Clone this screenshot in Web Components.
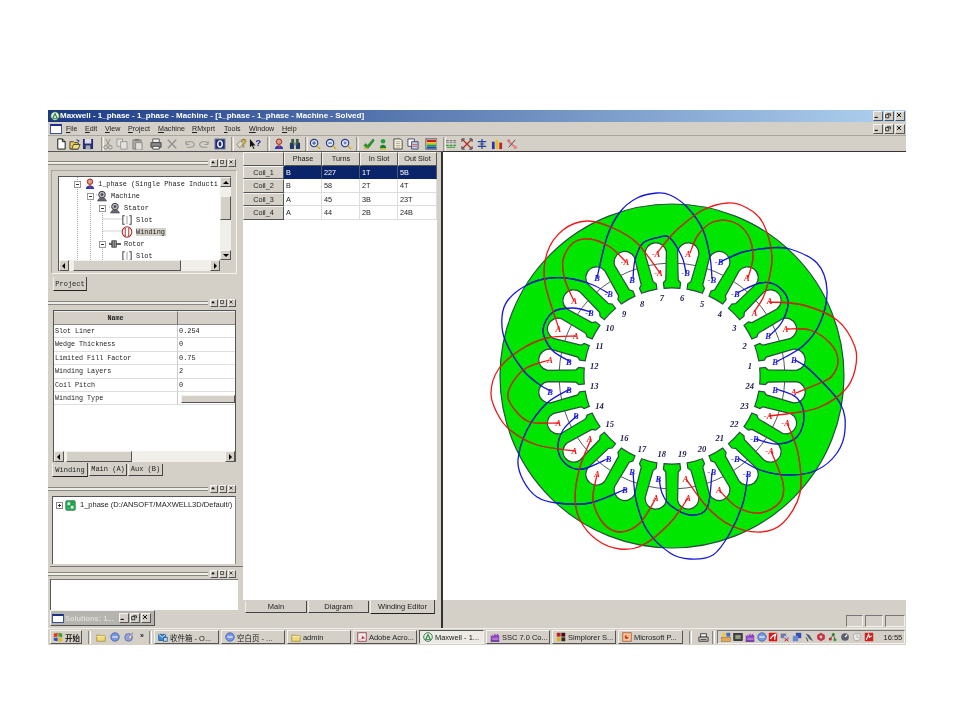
<!DOCTYPE html>
<html>
<head>
<meta charset="utf-8">
<title>Maxwell</title>
<style>
  html, body { margin: 0; background: #fff; }
  body { padding: 110px 0 0 48px; font-family: "Liberation Sans", "Noto Sans CJK SC", sans-serif; }
</style>
</head>
<body>
<maxwell-app></maxwell-app>
<script>
const BEVEL = `
  .up { border: 1px solid; border-color: #f4f2ee #555 #555 #f4f2ee; box-sizing: border-box; background: #d4d0c8; }
  .in { border: 1px solid; border-color: #777 #f4f2ee #f4f2ee #777; box-sizing: border-box; }
`
const MONO = `"Liberation Mono", monospace`

const ICONS = {
  page: `<path d="M3 1h5l3 3v8H3z" fill="#fff" stroke="#111"/><path d="M8 1v3h3" fill="none" stroke="#111"/>`,
  open: `<path d="M1 4h4l1 1h4v7H1z" fill="#e8c858" stroke="#443"/><path d="M3 12l2-5h7l-2 5z" fill="#f4dc80" stroke="#443"/><path d="M8 2l3 1-1 1" fill="none" stroke="#226"/>`,
  save: `<path d="M1 1h11v11H1z" fill="#24306e"/><path d="M3 1h7v5H3z" fill="#dde"/><path d="M4 8h5v4H4z" fill="#aab"/>`,
  cut: `<path d="M4 1l4 7M9 1L5 8" stroke="#8a8a86" fill="none"/><circle cx="4" cy="10" r="2" fill="none" stroke="#8a8a86"/><circle cx="9" cy="10" r="2" fill="none" stroke="#8a8a86"/>`,
  copy: `<path d="M1 1h6v8H1z" fill="#e4e2dc" stroke="#999"/><path d="M5 4h7v8H5z" fill="#e4e2dc" stroke="#999"/>`,
  paste: `<path d="M2 2h9v10H2z" fill="#aaa79e" stroke="#888"/><path d="M5 5h7v8H5z" fill="#e0ded8" stroke="#888"/><path d="M4 1h5v2H4z" fill="#777"/>`,
  print: `<path d="M3 1h7v4H3z" fill="#eee" stroke="#555"/><path d="M1 5h11v5H1z" fill="#8a8a8a" stroke="#444"/><path d="M3 9h7v3H3z" fill="#fff" stroke="#444"/>`,
  del: `<path d="M2 2l9 9M11 2l-9 9" stroke="#94928c" stroke-width="1.6"/>`,
  undo: `<path d="M2 6c2-3 7-3 9 0 1 2-1 4-4 4H3" fill="none" stroke="#98968f" stroke-width="1.2"/><path d="M2 3v4h4" fill="none" stroke="#98968f"/>`,
  redo: `<path d="M11 6C9 3 4 3 2 6c-1 2 1 4 4 4h4" fill="none" stroke="#98968f" stroke-width="1.2"/><path d="M11 3v4H7" fill="none" stroke="#98968f"/>`,
  zero: `<rect x="1" y="1" width="11" height="11" fill="#1c2c78" stroke="#889"/><ellipse cx="6.5" cy="6.5" rx="2.4" ry="3.4" fill="none" stroke="#fff" stroke-width="1.5"/>`,
  help: `<path d="M1 7l4-4 3 3-4 5z" fill="#dcd8c8" stroke="#888"/><text x="5" y="10" font-size="11" font-weight="bold" font-family="Liberation Sans" fill="#d8b000" stroke="#554" stroke-width=".3">?</text>`,
  what: `<path d="M1 1v9l2-2 2 4 1-1-2-3h3z" fill="#111"/><text x="7" y="9" font-size="10" font-weight="bold" font-family="Liberation Sans" fill="#1a2a88">?</text>`,
  user: `<circle cx="6.5" cy="4" r="3" fill="#d8a080" stroke="#a02020"/><path d="M2 12c0-5 9-5 9 0z" fill="#2838c0"/><path d="M5 8h3l-1 4z" fill="#c03030"/>`,
  binoc: `<rect x="1" y="5" width="4.5" height="7" rx="1" fill="#1f3a60"/><rect x="7.5" y="5" width="4.5" height="7" rx="1" fill="#1f3a60"/><rect x="2.5" y="1" width="3" height="5" fill="#3a5a48"/><rect x="7.5" y="1" width="3" height="5" fill="#3a5a48"/><rect x="5" y="5" width="3" height="3" fill="#888"/>`,
  zin: `<circle cx="5.5" cy="5.5" r="4" fill="#dfe8f8" stroke="#24388a" stroke-width="1.2"/><path d="M3.5 5.5h4M5.5 3.5v4" stroke="#24388a"/><path d="M8.5 8.5l3.5 3.5" stroke="#c8b020" stroke-width="1.6"/>`,
  zout: `<circle cx="5.5" cy="5.5" r="4" fill="#dfe8f8" stroke="#24388a" stroke-width="1.2"/><path d="M3.5 5.5h4" stroke="#24388a"/><path d="M8.5 8.5l3.5 3.5" stroke="#c8b020" stroke-width="1.6"/>`,
  zfit: `<circle cx="5.5" cy="5.5" r="4" fill="#dfe8f8" stroke="#24388a" stroke-width="1.2"/><circle cx="5.5" cy="5.5" r="1.6" fill="#6a80c0"/><path d="M8.5 8.5l3.5 3.5" stroke="#c8b020" stroke-width="1.6"/>`,
  check: `<path d="M1 8l2-2 2 2 6-7 1 2-7 9z" fill="#20a020" stroke="#0e5a18" stroke-width=".6"/><path d="M1 11h5" stroke="#c8b020" stroke-width="1.4"/>`,
  person: `<circle cx="6.5" cy="3.5" r="2.5" fill="#20a040"/><path d="M3 11c0-5 7-5 7 0z" fill="#148030"/><path d="M3 12h7" stroke="#d8b820" stroke-width="1.5"/>`,
  doc: `<path d="M2 1h7l2 2v9H2z" fill="#fbf6d8" stroke="#444"/><path d="M4 4h5M4 6h5M4 8h5M4 10h5" stroke="#888" stroke-width=".7"/>`,
  docs: `<path d="M1 1h7v8H1z" fill="#fff" stroke="#446"/><path d="M5 4h7v8H5z" fill="#c8d0e8" stroke="#446"/><path d="M6 7h5M6 9h5" stroke="#c03030" stroke-width=".7"/>`,
  chart: `<rect x="1" y="1" width="12" height="11" fill="#fff" stroke="#444"/><rect x="2" y="2" width="10" height="2.5" fill="#c82020"/><rect x="2" y="4.5" width="10" height="2.5" fill="#e0c020"/><rect x="2" y="7" width="10" height="2.5" fill="#20a040"/><rect x="2" y="9.5" width="10" height="2" fill="#2040c0"/>`,
  ant: `<path d="M1 3h3M5 3h3M9 3h3" stroke="#667" stroke-width="1.2"/><path d="M1 5h3M5 5h3M9 5h3" stroke="#889" /><path d="M1 8h3M5 8h3M9 8h3M2 10h9" stroke="#3a9a3a" stroke-width="1.2"/>`,
  redx: `<path d="M2 2l9 9M11 2l-9 9" stroke="#b01818" stroke-width="1.4"/><path d="M1 1h3M1 1v3M12 12H9M12 12V9" stroke="#223" /><path d="M12 1H9M12 1v3M1 12h3M1 12V9" stroke="#223"/>`,
  cross: `<path d="M6.5 1v11M2 4h9M2 9h9M4 6.5h5" stroke="#28409a" stroke-width="1.3"/>`,
  bars: `<rect x="1" y="4" width="3" height="8" fill="#2038b0"/><rect x="5" y="2" width="3" height="10" fill="#e8c020"/><rect x="9" y="5" width="3" height="7" fill="#c02020"/>`,
  wrench: `<path d="M2 3l9 8" stroke="#d88080" stroke-width="2"/><path d="M10 2L3 10" stroke="#445" stroke-width="1"/><circle cx="3" cy="3" r="1.6" fill="#d87070"/><circle cx="10" cy="10" r="2" fill="#e88888"/>`,
  machine: `<circle cx="6.5" cy="5" r="3.6" fill="#b8b8c0" stroke="#333"/><circle cx="6.5" cy="5" r="1.4" fill="#445"/><path d="M1.5 12h10l-2-3h-6z" fill="#667" stroke="#333" stroke-width=".5"/>`,
  rotor: `<rect x="3" y="3" width="5" height="7" fill="#999" stroke="#333" stroke-width=".7"/><path d="M4 3v7M6 3v7" stroke="#333" stroke-width=".6"/><path d="M8 6.5h5M0 6.5h3" stroke="#333" stroke-width="1.4"/>`,
  slot: `<path d="M4 2H2v9h2M9 2h2v9H9" fill="none" stroke="#444" stroke-width="1.1"/><path d="M6.5 2v9" stroke="#999"/>`,
  coil: `<ellipse cx="6.5" cy="6.5" rx="5.2" ry="5.6" fill="#fff" stroke="#a02020" stroke-width="1.1"/><path d="M4.6 2v9M8.4 2v9" stroke="#a02020"/>`,
  proj: `<rect x="1" y="1" width="11" height="11" rx="1" fill="#38b868" stroke="#0e6a38"/><path d="M3 3h3v3H3zM7 7h3v3H7z" fill="#d8f4d8"/><path d="M7 3h3M7 5h3M3 8h3" stroke="#0e5a30" stroke-width=".7"/>`,
  start: `<path d="M1 2l5-1v5l-5 1z" fill="#d84020"/><path d="M7 1l5 1v5l-5-1z" fill="#40a030"/><path d="M1 8l5-1v5l-5-1z" fill="#2850c0"/><path d="M7 7l5 1v4l-5 1z" fill="#e8b820"/>`,
  folder: `<path d="M1 4h4l1 1h6v7H1z" fill="#f0d878" stroke="#a08830"/><path d="M1 6h11" stroke="#fff4c0"/>`,
  ball: `<circle cx="6.5" cy="6.5" r="5.5" fill="#7898e0" stroke="#3a58a8"/><path d="M3 6.5h7" stroke="#fff" stroke-width="1.4"/>`,
  quick: `<circle cx="6" cy="7" r="5" fill="#9aa4dc" stroke="#5a64a8"/><path d="M5 8l6-7-2 8z" fill="#e8e8f0" stroke="#445" stroke-width=".5"/>`,
  inbox: `<rect x="1" y="3" width="9" height="8" fill="#3c88d0" stroke="#1c5898"/><path d="M1 3l4.5 4L10 3" fill="none" stroke="#fff"/><rect x="7" y="7" width="5" height="5" fill="#b8d8f0" stroke="#1c5898"/>`,
  adobe: `<rect x="1" y="1" width="11" height="11" fill="#f4e8e8" stroke="#8a3040"/><path d="M2 11c4-1 6-5 5-9 0 4 2 6 5 7-4-1-7 0-10 2z" fill="#c02030"/>`,
  maxwell: `<circle cx="6.5" cy="6.5" r="5.6" fill="#e8f0e0" stroke="#155a2a"/><path d="M6.5 2l4 8h-8z" fill="#1a7a38"/><path d="M6.5 5l1.8 4H4.700z" fill="#e8f0e0"/>`,
  ssc: `<path d="M1 12V4l2 2V3l2 3V2l2 3V2l2 3V2l3 3v7z" fill="#8a3cc0"/><path d="M1 12h11" stroke="#3a1a70" stroke-width="1.2"/><path d="M3 8h8M3 10h8" stroke="#e0d0f0" stroke-width=".7"/>`,
  simp: `<rect x="1" y="1" width="5" height="5" fill="#c02020"/><rect x="7" y="1" width="5" height="5" fill="#401010"/><rect x="1" y="7" width="5" height="5" fill="#e0b020"/><rect x="7" y="7" width="5" height="5" fill="#2a2a2a"/>`,
  ppt: `<rect x="1" y="1" width="11" height="11" fill="#f0c8a0" stroke="#b05020"/><circle cx="6" cy="6.500" r="2.600" fill="#d83010"/><path d="M6 6.500V3.900a2.600 2.600 0 0 1 2.600 2.600z" fill="#f8e0a0"/>`,
  printer: `<path d="M3 2h7v4H3z" fill="#eee" stroke="#333"/><path d="M1 6h11v5H1z" fill="#c8c6c0" stroke="#333"/><path d="M3 9h7" stroke="#333"/>`,
  t1: `<rect x="1" y="1" width="5" height="5" fill="#e8c850"/><rect x="7" y="1" width="5" height="5" fill="#4868b8"/><rect x="1" y="7" width="11" height="5" fill="#e8a850" stroke="#705010" stroke-width=".5"/>`,
  t2: `<rect x="1" y="2" width="11" height="9" fill="#444" stroke="#222"/><rect x="3" y="4" width="7" height="5" fill="#9a9a80"/>`,
  t5: `<rect x="1" y="1" width="11" height="11" rx="1" fill="#d81818"/><path d="M3 9c3-5 5-5 7-6-1 3-2 5-1 7" fill="none" stroke="#fff" stroke-width="1.6"/>`,
  t6: `<rect x="1" y="2" width="7" height="6" fill="#6878a8"/><rect x="5" y="5" width="7" height="6" fill="#b8c0d8"/><path d="M6 8l5 4M11 8l-5 4" stroke="#d02020" stroke-width="1.2"/>`,
  t7: `<rect x="5" y="1" width="7" height="7" fill="#3050b0"/><rect x="1" y="5" width="7" height="7" fill="#6a88d0"/>`,
  t8: `<path d="M2 2l5 2 5 8-5-3z" fill="#4a5a70"/><path d="M3 7l2 5" stroke="#222"/>`,
  t9: `<path d="M6.500 1l5 3v5l-5 3-5-3V4z" fill="#c83048"/><circle cx="6.500" cy="6.500" r="1.800" fill="#f0d0d0"/>`,
  t10: `<circle cx="3" cy="9" r="2" fill="#c83028"/><circle cx="9" cy="10" r="2" fill="#30a040"/><circle cx="7" cy="3" r="2" fill="#30a040"/><path d="M3 9l4-6 2 7" fill="none" stroke="#444"/>`,
  t11: `<circle cx="6.500" cy="6.500" r="5" fill="#5a6070"/><path d="M6.500 6.500l3-3" stroke="#fff" stroke-width="1.400"/>`,
  t12: `<circle cx="6.500" cy="6.500" r="5" fill="#e8e8e4" stroke="#a0a0a0"/><path d="M6.500 3v4h3" fill="none" stroke="#aaa"/>`,
  t13: `<rect x="1" y="1" width="11" height="11" fill="#d02020"/><path d="M3 10l3-7 1 4 3-2" fill="none" stroke="#fff" stroke-width="1.400"/>`,
}
const ico = (name, size = 13) =>
  `<svg width="${size}" height="${size}" viewBox="0 0 13 13" style="display:block;flex:none">${ICONS[name]}</svg>`

// small window buttons, kind "dock" or "mdi"
class WinButtons extends HTMLElement {
  connectedCallback() {
    const kind = this.getAttribute('kind') || 'mdi'
    const size = +(this.getAttribute('size') || 10)
    const first = kind === 'dock'
      ? `<path d="M2 7h6L5 3z" fill="#111"/>`
      : `<path d="M2 8h4" stroke="#111" stroke-width="1.4"/>`
    const second = kind === 'dock'
      ? `<path d="M2.500 2.500h5v5h-5z" fill="none" stroke="#111"/>`
      : `<path d="M4 3.500h4v3M2 4.500h4v4H2z" fill="none" stroke="#111"/>`
    const third = `<path d="M2.500 2.500l5 5M7.500 2.500l-5 5" stroke="#111" stroke-width="1.200"/>`
    const root = this.attachShadow({ mode: 'open' })
    root.innerHTML = `<style>${BEVEL}
      :host { display: flex; gap: 1px; flex: none; }
      div { width: ${size}px; height: ${size}px; }
      svg { display: block; width: 100%; height: 100%; margin: -1px; }
    </style>` + [first, second, third].map((g) =>
      `<div class="up"><svg viewBox="0 0 10 10">${g}</svg></div>`).join('')
  }
}
customElements.define('win-buttons', WinButtons)

class TitleBar extends HTMLElement {
  constructor() {
    super()
    this.attachShadow({ mode: 'open' }).innerHTML = `<style>
      :host { display: flex; align-items: center; height: 12px; background: linear-gradient(90deg, #1c3a84, #b0d2f0); padding: 0 1px 0 2px; }
      span { flex: 1; margin-left: 0; color: #fff; font: bold 8px/12px "Liberation Sans", sans-serif; white-space: nowrap; }
    </style>${ico('maxwell', 10)}<span><slot></slot></span><win-buttons></win-buttons>`
  }
}
customElements.define('title-bar', TitleBar)

class MenuBar extends HTMLElement {
  constructor() {
    super()
    const items = ['File', 'Edit', 'View', 'Project', 'Machine', 'RMxprt', 'Tools', 'Window', 'Help']
    this.attachShadow({ mode: 'open' }).innerHTML = `<style>
      :host { display: flex; align-items: center; height: 14px; background: #d4d0c8; padding: 0 1px 0 2px; border-bottom: 1px solid #aaa69e; box-sizing: border-box; font: 7.100px "Liberation Sans", sans-serif; color: #222; }
      .doc { width: 12px; height: 10px; box-sizing: border-box; border: 1px solid #3a50a0; border-top: 2px solid #1a2f88; background: #fff; margin-right: 4px; }
      nav { flex: 1; display: flex; }
      a { white-space: nowrap; }
      a::first-letter { text-decoration: underline; }
    </style><div class="doc"></div><nav>${items.map((t, i) =>
      `<a style="display:inline-block;width:${[19, 20, 23, 30, 34, 32, 25, 33, 20][i]}px">${t}</a>`).join('')}</nav><win-buttons></win-buttons>`
  }
}
customElements.define('menu-bar', MenuBar)

class ToolBar extends HTMLElement {
  constructor() {
    super()
    // [centre x in window coordinates, icon], 0 as icon is a separator
    const items = [[61, 'page'], [75, 'open'], [88, 'save'], [102, 0], [108, 'cut'], [122, 'copy'], [137, 'paste'], [156, 'print'], [172, 'del'], [190, 'undo'], [204, 'redo'], [220, 'zero'], [232, 0],
      [242, 'help'], [255, 'what'], [268, 0], [279, 'user'], [295, 'binoc'], [306, 0], [315, 'zin'], [331, 'zout'], [346, 'zfit'], [357, 0], [369, 'check'], [383, 'person'], [398, 'doc'], [413, 'docs'], [431, 'chart'], [444, 0],
      [451, 'ant'], [467, 'redx'], [482, 'cross'], [497, 'bars'], [512, 'wrench']]
    let x = 48
    const html = items.map(([cx, name]) => {
      const w = name ? 12 : 3
      const gap = cx - w / 2 - x
      x = cx + w / 2
      return name
        ? `<span style="margin-left:${gap}px">${ico(name, 12)}</span>`
        : `<i style="margin-left:${gap}px"></i>`
    }).join('')
    this.attachShadow({ mode: 'open' }).innerHTML = `<style>
      :host { display: flex; height: 16px; background: #d4d0c8; align-items: center; border-bottom: 1px solid #555; box-sizing: border-box; }
      span { display: block; width: 12px; flex: none; }
      i { display: block; width: 1px; height: 14px; border-left: 1px solid #98958c; border-right: 1px solid #f4f2ee; flex: none; }
    </style>${html}`
  }
}
customElements.define('tool-bar', ToolBar)

class DockHead extends HTMLElement {
  constructor() {
    super()
    this.attachShadow({ mode: 'open' }).innerHTML = `<style>
      :host { display: flex; align-items: center; height: 9px; padding: 0 7px 0 0; margin-left: -2px; gap: 1px; }
      div { flex: 1; height: 2px; border-top: 1px solid #8a877f; border-bottom: 1px solid #8a877f; background: #f0eee8; margin-right: 1px; }
    </style><div></div><win-buttons kind="dock" size="8"></win-buttons>`
  }
}
customElements.define('dock-head', DockHead)

class TabStrip extends HTMLElement {
  connectedCallback() {
    const tabs = this.getAttribute('tabs').split('|')
    const active = +this.getAttribute('active')
    const widths = this.getAttribute('widths').split(',')
    const mono = this.hasAttribute('mono')
    this.attachShadow({ mode: 'open' }).innerHTML = `<style>
      :host { display: flex; align-items: flex-start; font: ${mono ? `7px ${MONO}` : '7.500px "Liberation Sans", sans-serif'}; color: #222; }
      div { box-sizing: border-box; border: 1px solid; border-top: 0; border-color: #d4d0c8 #444 #444 #eee; text-align: center; height: 12px; line-height: 11px; margin-right: 1px; margin-top: 1px; white-space: nowrap; }
      div.on { height: 14px; margin-top: 0; line-height: 14px; background: #d4d0c8; border-bottom-color: #222; }
    </style>` + tabs.map((t, i) =>
      `<div class="${i === active ? 'on' : ''}" style="width:${widths[i]}px">${t}</div>`).join('')
  }
}
customElements.define('tab-strip', TabStrip)

class ScrollBar extends HTMLElement {
  connectedCallback() {
    const vert = this.hasAttribute('vertical')
    const before = this.getAttribute('before'), size = this.getAttribute('thumb')
    const arrow = vert ? ['M1 6l3-3 3 3z', 'M1 3l3 3 3-3z'] : ['M5 1L2 4l3 3z', 'M3 1l3 3-3 3z']
    this.attachShadow({ mode: 'open' }).innerHTML = `<style>${BEVEL}
      :host { display: flex; flex-direction: ${vert ? 'column' : 'row'}; flex: none; ${vert ? 'width: 11px' : 'height: 11px'}; background: #f1efe9; box-sizing: border-box; }
      .btn { flex: none; width: ${vert ? '100%' : '10px'}; height: ${vert ? '10px' : '100%'}; display: flex; align-items: center; justify-content: center; }
      svg { width: 8px; height: 8px; }
      .t { ${vert ? 'height' : 'width'}: ${size}px; flex: none; margin-${vert ? 'top' : 'left'}: ${before}px; }
      .s { flex: 1; }
    </style>
    <div class="btn up"><svg viewBox="0 0 8 8"><path d="${arrow[0]}"/></svg></div>
    <div class="t up"></div><div class="s"></div>
    <div class="btn up"><svg viewBox="0 0 8 8"><path d="${arrow[1]}"/></svg></div>`
  }
}
customElements.define('scroll-bar', ScrollBar)

class ProjectTree extends HTMLElement {
  constructor() {
    super()
    const rows = [
      [77, 'user', 90, 98, '1_phase (Single Phase Inducti'],
      [90, 'machine', 102, 111, 'Machine'],
      [102, 'machine', 115, 124, 'Stator'],
      [0, 'slot', 127, 136, 'Slot'],
      [0, 'coil', 127, 136, 'Winding', 1],
      [102, 'rotor', 115, 124, 'Rotor'],
      [0, 'slot', 127, 136, 'Slot'],
    ]
    const origin = 59
    const body = rows.map(([box, icon, ix, tx, text, hi]) => `<div class="row">
        ${box ? `<b style="margin-left:${box - 3 - origin}px"><u></u></b>` : ''}
        <span style="${box ? `margin-left:${ix - 6 - box - 4}px` : `margin-left:${ix - 6 - origin}px`}">${ico(icon, 12)}</span>
        <em class="${hi ? 'hi' : ''}" style="margin-left:${tx - ix - 6}px">${text}</em></div>`).join('')
    this.attachShadow({ mode: 'open' }).innerHTML = `<style>${BEVEL}
      :host { display: grid; grid-template-columns: 1fr 11px; grid-template-rows: 1fr 11px; height: 95px; background: #fff; font: 6.900px ${MONO}; color: #222; overflow: hidden; box-sizing: border-box; border-left: 1px solid #555; border-top: 1px solid #555; }
      .tree { position: relative; padding-top: 1px; overflow: hidden; white-space: nowrap; }
      .row { display: flex; align-items: center; height: 12px; position: relative; }
      b { width: 7px; height: 7px; box-sizing: border-box; border: 1px solid #999; background: #fff; flex: none; position: relative; }
      u { position: absolute; left: 1px; top: 2px; width: 3px; height: 1px; background: #333; }
      em { font-style: normal; }
      em.hi { background: #d4d0c8; padding-right: 1px; }
      svg.lines { position: absolute; left: 0; top: 0; }
      .corner { background: #d4d0c8; }
    </style>
    <div class="tree">
      <svg class="lines" width="160" height="90" stroke="#aaa" stroke-dasharray="1 1" fill="none"><path d="M18.500 0V90M31.500 18V90M43.500 30V70M43.500 42h20M43.500 54h20M37 18h6M50 30h6M50 66h6M43.500 66V90"/></svg>
      ${body}
    </div>
    <scroll-bar vertical before="9" thumb="24"></scroll-bar>
    <scroll-bar before="4" thumb="108"></scroll-bar>
    <div class="corner"></div>`
  }
}
customElements.define('project-tree', ProjectTree)

class PropGrid extends HTMLElement {
  constructor() {
    super()
    const rows = [['Slot Liner', '0.254'], ['Wedge Thickness', '0'], ['Limited Fill Factor', '0.75'], ['Winding Layers', '2'], ['Coil Pitch', '0'], ['Winding Type', '']]
    this.attachShadow({ mode: 'open' }).innerHTML = `<style>${BEVEL}
      :host { display: flex; flex-direction: column; height: 152px; background: #fff; font: 6.700px ${MONO}; color: #222; border-left: 1px solid #555; border-top: 1px solid #555; border-right: 1px solid #555; box-sizing: border-box; }
      .grid { flex: 1; display: grid; grid-template-columns: 124px 1fr; grid-template-rows: 14px; grid-auto-rows: 13.400px; align-content: start; }
      .h { background: #d4d0c8; border-right: 1px solid #777; border-bottom: 1px solid #888; border-top: 1px solid #eee; box-sizing: border-box; text-align: center; line-height: 12px; font-weight: bold; }
      .c { border-bottom: 1px solid #ddd; border-right: 1px solid #ccc; padding-left: 1px; line-height: 13px; box-sizing: border-box; white-space: nowrap; }
      .v { border-right: 0; font-size: 6.900px; padding-left: 1px; }
      .combo { margin: 3px 0 0 2px; height: 8px; }
    </style>
    <div class="grid">
      <div class="h">Name</div><div class="h" style="border-right:0"></div>
      ${rows.map(([n, v], i) => `<div class="c">${n}</div><div class="c v">${i === 5 ? '<div class="combo up"></div>' : v}</div>`).join('')}
    </div>
    <scroll-bar before="2" thumb="66"></scroll-bar>`
  }
}
customElements.define('prop-grid', PropGrid)

class CoilTable extends HTMLElement {
  constructor() {
    super()
    const rows = [['Coil_1', 'B', '227', '1T', '5B'], ['Coil_2', 'B', '58', '2T', '4T'], ['Coil_3', 'A', '45', '3B', '23T'], ['Coil_4', 'A', '44', '2B', '24B']]
    this.attachShadow({ mode: 'open' }).innerHTML = `<style>${BEVEL}
      :host { display: grid; grid-template-columns: 41px 38px 38px 38px 39px; grid-template-rows: 14px; grid-auto-rows: 13.400px; align-content: start; background: #fff; font: 7.300px "Liberation Sans", sans-serif; color: #222; }
      div { box-sizing: border-box; white-space: nowrap; }
      .h { text-align: center; line-height: 12px; }
      .c { border-right: 1px solid #ddd; border-bottom: 1px solid #ddd; padding-left: 2px; line-height: 13px; }
      .sel { background: #0a246a; color: #fff; border-color: #0a246a; border-right-color: #556; }
    </style>
    <div class="h up"></div>${['Phase', 'Turns', 'In Slot', 'Out Slot'].map((t) => `<div class="h up">${t}</div>`).join('')}
    ${rows.map(([name, ...cells], r) => `<div class="h up">${name}</div>` +
      cells.map((t) => `<div class="c ${r === 0 ? 'sel' : ''}">${t}</div>`).join('')).join('')}`
  }
}
customElements.define('coil-table', CoilTable)

class StatorView extends HTMLElement {
  constructor() {
    super()
    const cx = 672, cy = 376, R = 172, bore = 88
    const pt = (k, u, v) => {
      const a = ((7.5 + 15 * (k - 1)) * Math.PI) / 180
      return [cx + u * Math.cos(a) - v * Math.sin(a), cy - u * Math.sin(a) - v * Math.cos(a)]
    }
    const f = (p) => p[0].toFixed(1) + ' ' + p[1].toFixed(1)

    let d = `M${cx - R} ${cy}A${R} ${R} 0 1 0 ${cx + R} ${cy}A${R} ${R} 0 1 0 ${cx - R} ${cy}Z`
    let line = ''
    for (let k = 1; k <= 24; k++) {
      d += (k === 1 ? 'M' : `A${bore} ${bore} 0 0 0 `) + f(pt(k, bore, -3.6))
      d += 'L' + f(pt(k, 93.5, -3.6)) + 'L' + f(pt(k, 96, -6.4)) + 'L' + f(pt(k, 124, -10.7))
      d += `A10.7 10.7 0 0 0 ` + f(pt(k, 124, 10.7))
      d += 'L' + f(pt(k, 96, 6.4)) + 'L' + f(pt(k, 93.5, 3.6)) + 'L' + f(pt(k, bore, 3.6))
      line += `M${f(pt(k, 112.5, -9))}A112 112 0 0 0 ${f(pt(k, 112.5, 9))}`
    }
    d += `A${bore} ${bore} 0 0 0 ` + f(pt(1, bore, -3.6)) + 'Z'

    const blue = [
      [776,362,803,346,820,323,827,290,817,263,790,249,770,248,743,252,720,262],
      [769,336,782,322,788,300,776,285,760,283,737,293],
      [712,279,710,257,703,230,687,207,670,195,657,193,637,198,620,212,607,237,597,278],
      [686,273,682,257,670,238,660,237,643,243,635,260,633,279],
      [608,293,593,285,573,279,550,278,527,285,508,300,502,317,505,340,523,370,540,385,551,391],
      [591,312,573,308,553,312,543,330,552,350,571,362],
      [570,389,547,403,527,430,518,460,523,480,537,497,557,503,590,503,626,489],
      [578,415,563,430,558,450,567,465,583,469,609,458],
      [633,472,636,500,647,530,670,553,690,559,713,555,730,533,743,503,748,474],
      [659,478,662,493,670,505,690,515,707,508,712,473],
      [738,458,760,470,790,475,817,470,837,453,845,430,840,403,810,370,795,360],
      [756,439,777,444,797,437,804,417,797,398,776,389],
    ]
    const red = [
      [787,329,810,330,830,343,838,360,832,376,820,383,796,393],
      [769,302,803,305,837,320,855,347,855,370,845,390,820,407,793,413,769,416],
      [754,312,765,293,772,257,763,223,747,208,728,203,703,210,680,227,670,237,657,253],
      [748,278,753,257,748,235,733,222,713,222,698,235,690,253],
      [660,273,637,243,613,228,587,221,563,230,547,253,545,283,559,329],
      [626,262,610,247,590,239,573,243,563,260,565,280,574,301],
      [576,336,547,338,520,350,498,370,491,393,497,413,510,430,537,445,575,451],
      [549,360,523,370,508,393,515,410,530,422,559,423],
      [591,439,580,467,575,497,580,520,597,540,620,549,643,545,670,523,688,498],
      [597,475,593,500,603,523,620,532,640,523,656,498],
      [686,479,707,507,730,525,760,532,783,523,800,493,798,453,787,423],
      [719,490,737,507,760,513,780,502,783,483,771,451],
    ]
    // Catmull-Rom through the way points
    const spline = (a) => {
      const p = []
      for (let i = 0; i < a.length; i += 2) p.push([a[i], a[i + 1]])
      let s = 'M' + f(p[0])
      for (let i = 0; i < p.length - 1; i++) {
        const p0 = p[i - 1] || p[i], p1 = p[i], p2 = p[i + 1], p3 = p[i + 2] || p2
        s += 'C' + f([p1[0] + (p2[0] - p0[0]) / 6, p1[1] + (p2[1] - p0[1]) / 6]) + ' ' +
          f([p2[0] - (p3[0] - p1[0]) / 6, p2[1] - (p3[1] - p1[1]) / 6]) + ' ' + f(p2)
      }
      return s
    }
    const blueD = blue.map(spline).join('')
    const redD = red.map(spline).join('')

    // [inner label, outer label] of each slot
    const labels = 'B B,B A,A A,-B A,-B -B,-B A,-A -A,B -A,-B B,-B A,A A,B A,B B,B A,A A,B A,B B,B A,A A,-B A,-B -B,-B -A,-A -A,B A'
      .split(',').map((s) => s.split(' '))
    const text = labels.map(([inner, outer], i) => {
      const k = i + 1
      const put = (u, t) => {
        const p = pt(k, u, 0)
        const col = t.includes('A') ? '#f01818' : '#1c1ce0'
        return `<text x="${p[0].toFixed(1)}" y="${(p[1] + 3).toFixed(1)}" fill="${col}">${t}</text>`
      }
      const n = pt(k, 78.5, 0)
      return put(104, inner) + put(123, outer) +
        `<text class="n" x="${n[0].toFixed(1)}" y="${(n[1] + 3).toFixed(1)}">${k}</text>`
    }).join('')

    this.attachShadow({ mode: 'open' }).innerHTML = `<style>
      :host { display: block; background: #fff; overflow: hidden; }
      svg { display: block; }
      text { font: italic bold 8.500px "Liberation Serif", serif; text-anchor: middle; }
      text.n { fill: #1c1c48; }
      path { fill: none; }
    </style>
    <svg width="462" height="448" viewBox="443 152 462 448">
      <defs><clipPath id="iron"><path d="${d}" clip-rule="evenodd"/></clipPath></defs>
      <path d="${d}" style="fill:#00e600" fill-rule="evenodd" stroke="#28503c" stroke-width="1.200"/>
      <path d="${line}" stroke="#3c4a48" stroke-width=".9"/>
      <path d="${blueD}" stroke="#1616d8" stroke-width="1.300"/>
      <path d="${redD}" stroke="#ee1a1a" stroke-width="1.300"/>
      <g clip-path="url(#iron)">
        <path d="${blueD}" stroke="#0a2c9c" stroke-width="1.300"/>
        <path d="${redD}" stroke="#a83a14" stroke-width="1.300"/>
      </g>
      ${text}
    </svg>`
  }
}
customElements.define('stator-view', StatorView)

class TaskBar extends HTMLElement {
  constructor() {
    super()
    const tasks = [['inbox', '收件箱 - O...', 65], ['ball', '空白页 - ...', 64], ['folder', 'admin', 64], ['adobe', 'Adobe Acro...', 64], ['maxwell', 'Maxwell - 1...', 65, 1], ['ssc', 'SSC 7.0 Co...', 64], ['simp', 'Simplorer S...', 64], ['ppt', 'Microsoft P...', 65]]
    const tray = ['t1', 't2', 'ssc', 'ball', 't5', 't6', 't7', 't8', 't9', 't10', 't11', 't12', 't13']
    this.attachShadow({ mode: 'open' }).innerHTML = `<style>${BEVEL}
      :host { display: flex; align-items: center; height: 17px; background: #d4d0c8; padding-left: 2px; font: 7.500px "Liberation Sans", "Noto Sans CJK SC", sans-serif; color: #222; border-top: 1px solid #f0eee8; box-sizing: border-box; }
      .start { width: 32px; height: 14px; display: flex; align-items: center; gap: 2px; padding-left: 2px; font-weight: bold; flex: none; }
      .sep { width: 1px; height: 13px; border-left: 1px solid #888; border-right: 1px solid #fff; flex: none; }
      .q { display: flex; align-items: center; gap: 4px; flex: none; }
      .more { font-weight: bold; font-size: 7px; margin-bottom: 3px; }
      .task { height: 14px; display: flex; align-items: center; gap: 2px; padding-left: 3px; margin-right: 2px; flex: none; white-space: nowrap; overflow: hidden; }
      .task.on { background: #eceae4; border-color: #555 #f4f2ee #f4f2ee #555; }
      .tray { margin-left: 2px; width: 188px; height: 14px; display: flex; align-items: center; gap: 1.900px; padding-left: 3px; flex: none; }
      .tray time { margin-left: 8px; }
    </style>
    <div class="start up">${ico('start', 10)}开始</div>
    <div class="sep" style="margin-left:6px"></div>
    <div class="q" style="margin-left:5px">${ico('folder', 10)}${ico('ball', 10)}${ico('quick', 10)}<span class="more" style="margin-left:2px">»</span></div>
    <div class="sep" style="margin:0 2px 0 5px"></div>
    ${tasks.map(([i, t, w, on]) => `<div class="task up ${on ? 'on' : ''}" style="width:${w}px">${ico(i, 10)}${t}</div>`).join('')}
    <div class="sep" style="margin-left:4px"></div>
    <div style="margin:0 3px 0 6px">${ico('printer', 11)}</div>
    <div class="sep"></div>
    <div class="tray in">${tray.map((i) => ico(i, 10)).join('')}<time>16:55</time></div>`
  }
}
customElements.define('task-bar', TaskBar)

class MaxwellApp extends HTMLElement {
  constructor() {
    super()
    this.attachShadow({ mode: 'open' }).innerHTML = `<style>${BEVEL}
      :host { display: block; width: 858px; height: 535px; background: #d4d0c8; filter: blur(.35px); }
      .main { display: grid; grid-template-columns: 195px 194px 6px 463px; height: 476px; }
      .left { display: flex; flex-direction: column; overflow: hidden; padding-left: 2px; }
      .p1 { height: 145px; padding-top: 6px; box-sizing: border-box; }
      .p2 { height: 184px; padding-top: 1px; box-sizing: border-box; }
      .p3 { height: 86px; padding-top: 3px; box-sizing: border-box; border-bottom: 1px solid #777; }
      .p4 { height: 43px; padding-top: 2px; box-sizing: border-box; }
      .frame { margin: 3px 7px 0 3px; }
      .f1 { margin: 3px 6px 0 1px; border: 1px solid; border-color: #aaa69e #f4f2ee #f4f2ee #aaa69e; padding: 5px 5px 2px 6px; }
      .tree3 { height: 68px; background: #fff; border-left: 1px solid #555; border-top: 1px solid #555; border-right: 1px solid #888; margin: 3px 7px 0 2px; display: flex; align-items: flex-start; padding: 3px 0 0 3px; gap: 2px; box-sizing: border-box; font: 7.500px "Liberation Sans", sans-serif; color: #222; white-space: nowrap; }
      .tree3 b { width: 7px; height: 7px; border: 1px solid #888; box-sizing: border-box; margin-top: 2px; background: linear-gradient(#333,#333) center/3px 1px no-repeat, linear-gradient(#333,#333) center/1px 3px no-repeat; }
      .log { height: 30px; background: #fff; border-left: 1px solid #555; border-top: 1px solid #777; margin: 1px 5px 0 0; }
      .tabs1 { margin: 3px 0 0 3px; }
      .tabs2 { margin: 1px 0 0 2px; }
      .mini { width: 105px; height: 16px; flex: none; display: flex; align-items: center; padding: 0 3px 0 1px; background: #b6b4ae; font: bold 7.400px "Liberation Sans", sans-serif; color: #dedcd6; box-sizing: border-box; }
      .mini i { width: 12px; height: 9px; background: #fff; border: 1px solid #3a50a0; border-top: 2px solid #1a2f88; box-sizing: border-box; margin-right: 1px; flex: none; }
      .mini span { flex: 1; white-space: nowrap; }
      .center { display: flex; flex-direction: column; }
      .center coil-table { height: 448px; }
      .split { background: #d4d0c8; border-right: 2px solid #333; box-sizing: border-box; }
      .right { display: flex; flex-direction: column; }
      .right stator-view { height: 448px; border-top: 1px solid #333; margin-top: -1px; }
      .status { display: flex; justify-content: flex-end; gap: 2px; margin: 15px 1px 0 0; }
      .status div { height: 12px; }
    </style>
    <title-bar>Maxwell - 1_phase - 1_phase - Machine - [1_phase - 1_phase - Machine - Solved]</title-bar>
    <menu-bar></menu-bar>
    <tool-bar></tool-bar>
    <div class="main">
      <div class="left">
        <div class="p1">
          <dock-head></dock-head>
          <div class="f1"><project-tree></project-tree></div>
          <tab-strip class="tabs1" mono tabs="Project" active="0" widths="34"></tab-strip>
        </div>
        <div class="p2">
          <dock-head></dock-head>
          <div class="frame"><prop-grid></prop-grid></div>
          <tab-strip class="tabs2" mono tabs="Winding|Main (A)|Aux (B)" active="0" widths="36,38,35"></tab-strip>
        </div>
        <div class="p3">
          <dock-head></dock-head>
          <div class="tree3"><b></b>${ico('proj', 11)}<span style="margin-left:2px">1_phase (D:/ANSOFT/MAXWELL3D/Default/)</span></div>
        </div>
        <div class="p4">
          <dock-head></dock-head>
          <div class="log"></div>
        </div>
        <div class="mini up"><i></i><span>Solutions: 1...</span><win-buttons></win-buttons></div>
      </div>
      <div class="center">
        <coil-table></coil-table>
        <tab-strip style="margin-left:2px" tabs="Main|Diagram|Winding Editor" active="2" widths="62,61,65"></tab-strip>
      </div>
      <div class="split"></div>
      <div class="right">
        <stator-view></stator-view>
        <div class="status"><div class="in" style="width:17px"></div><div class="in" style="width:18px"></div><div class="in" style="width:20px"></div></div>
      </div>
    </div>
    <task-bar></task-bar>`
  }
}
customElements.define('maxwell-app', MaxwellApp)
</script>
</body>
</html>
